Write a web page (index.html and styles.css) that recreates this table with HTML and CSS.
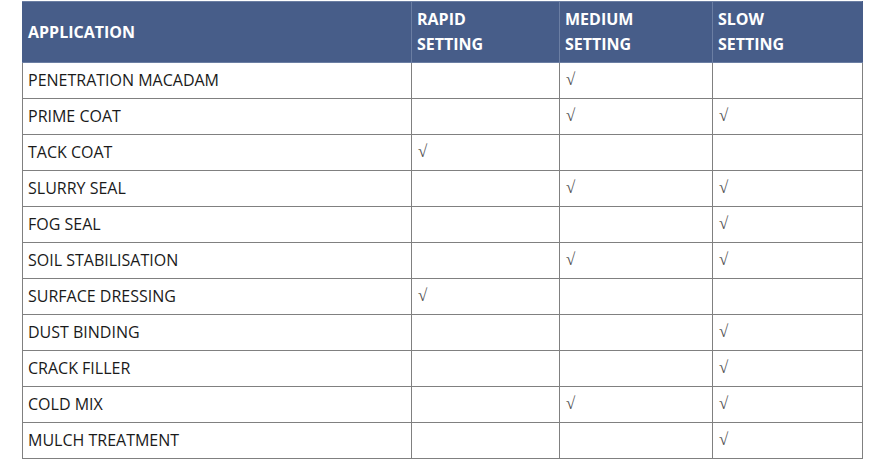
FILE: index.html
```html
<!DOCTYPE html>
<html>
<head>
<meta charset="utf-8">
<link rel="stylesheet" href="styles.css">
</head>
<body>
<table class="grid">
  <colgroup>
    <col class="c1"><col class="c2"><col class="c3"><col class="c4">
  </colgroup>
  <thead>
    <tr><th>APPLICATION</th><th>RAPID<br>SETTING</th><th>MEDIUM<br>SETTING</th><th>SLOW<br>SETTING</th></tr>
  </thead>
  <tbody>
    <tr><td>PENETRATION MACADAM</td><td></td><td class="ck">√</td><td></td></tr>
    <tr><td>PRIME COAT</td><td></td><td class="ck">√</td><td class="ck">√</td></tr>
    <tr><td>TACK COAT</td><td class="ck">√</td><td></td><td></td></tr>
    <tr><td>SLURRY SEAL</td><td></td><td class="ck">√</td><td class="ck">√</td></tr>
    <tr><td>FOG SEAL</td><td></td><td></td><td class="ck">√</td></tr>
    <tr><td>SOIL STABILISATION</td><td></td><td class="ck">√</td><td class="ck">√</td></tr>
    <tr><td>SURFACE DRESSING</td><td class="ck">√</td><td></td><td></td></tr>
    <tr><td>DUST BINDING</td><td></td><td></td><td class="ck">√</td></tr>
    <tr><td>CRACK FILLER</td><td></td><td></td><td class="ck">√</td></tr>
    <tr><td>COLD MIX</td><td></td><td class="ck">√</td><td class="ck">√</td></tr>
    <tr><td>MULCH TREATMENT</td><td></td><td></td><td class="ck">√</td></tr>
  </tbody>
</table>
</body>
</html>
```
FILE: styles.css
```css
html, body { margin: 0; padding: 0; background: #fff; }
body { padding: 1px 0 0 22px; font-family: "Open Sans", sans-serif; }
.grid {
  border-collapse: collapse;
  width: 840px;
  table-layout: fixed;
}
.c1 { width: 389px; }
.c2 { width: 148px; }
.c3 { width: 153px; }
.c4 { width: 150px; }
.grid th {
  background: #475d89;
  color: #fff;
  font-weight: 700;
  font-size: 16px;
  line-height: 25px;
  text-align: left;
  padding: 5px 5px 5px 5px;
  height: 50px;
  border: 1px solid #6b7ea3;
  vertical-align: middle;
}
.grid th:first-child { border-left-color: #475d89; }
.grid th:last-child { border-right-color: #475d89; }
.grid thead tr { border: 1px solid #475d89; }
.grid td {
  border: 1px solid #808080;
  height: 36px;
  padding: 0 5px 2px 5px;
  font-size: 16px;
  color: #1a1a1a;
  vertical-align: middle;
  box-sizing: border-box;
}
.grid td.ck {
  font-family: "Liberation Serif", serif;
  color: #555;
  font-size: 17px;
  padding-left: 6px;
}
```
